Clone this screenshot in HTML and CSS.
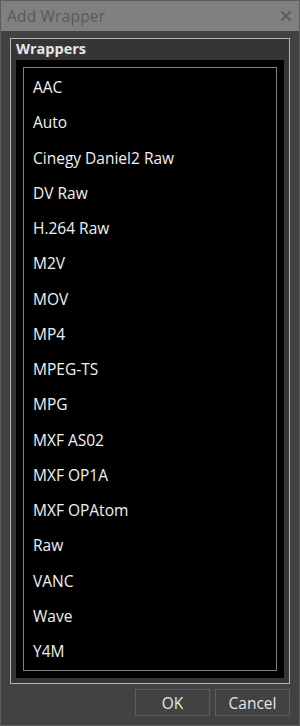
FILE: index.html
```html
<!DOCTYPE html>
<html>
<head>
<meta name="viewport" content="width=device-width, initial-scale=1">
<link rel="stylesheet" href="styles.css">
<title>Add Wrapper</title>
</head>
<body>

<div class="window">
    <div class="titlebar">
        <span class="title">Add Wrapper</span>
        <svg class="close" width="12" height="12" viewBox="0 0 12 12">
            <path d="M1.5 1.5 L10.5 10.5 M10.5 1.5 L1.5 10.5" stroke="#5e5e5e" stroke-width="2.2"/>
        </svg>
    </div>

    <div class="content">
        <div class="group">
            <div class="group_title">Wrappers</div>
            <div class="list_outer">
                <div class="list">
                    <div class="item">AAC</div>
                    <div class="item">Auto</div>
                    <div class="item">Cinegy Daniel2 Raw</div>
                    <div class="item">DV Raw</div>
                    <div class="item">H.264 Raw</div>
                    <div class="item">M2V</div>
                    <div class="item">MOV</div>
                    <div class="item">MP4</div>
                    <div class="item">MPEG-TS</div>
                    <div class="item">MPG</div>
                    <div class="item">MXF AS02</div>
                    <div class="item">MXF OP1A</div>
                    <div class="item">MXF OPAtom</div>
                    <div class="item">Raw</div>
                    <div class="item">VANC</div>
                    <div class="item">Wave</div>
                    <div class="item">Y4M</div>
                </div>
            </div>
        </div>

        <div class="buttons">
            <button class="btn">OK</button>
            <button class="btn">Cancel</button>
        </div>
    </div>
</div>

</body>
</html>
```

FILE: styles.css
```css
body {
    margin: 0;
    background-color: #424242;
    font-family: "Open Sans", "Noto Sans", sans-serif;
}

.window {
    width: 300px;
    height: 726px;
    box-sizing: border-box;
    border: 1px solid #5c5c5c;
    background-color: #424242;
    display: flex;
    flex-direction: column;
}

.titlebar {
    height: 30px;
    background-color: #808080;
    display: flex;
    align-items: center;
    justify-content: space-between;
    padding: 0 7px 0 6px;
    flex-shrink: 0;
}

.title {
    color: #5a5a5a;
    font-size: 15.5px;
    letter-spacing: 0.2px;
    margin-top: -1px;
}

.close {
    display: block;
}

.content {
    flex: 1;
    padding: 7px 9px 10px 9px;
    display: flex;
    flex-direction: column;
}

.group {
    border: 1px solid #b4b4b4;
    background-color: #353535;
    padding: 0 5px 5px 5px;
    height: 646px;
    box-sizing: border-box;
    display: flex;
    flex-direction: column;
}

.group_title {
    color: #e6e6e6;
    font-weight: bold;
    font-size: 14.5px;
    height: 22px;
    line-height: 22px;
    margin-top: -1px;
}

.list_outer {
    flex: 1;
    background-color: #000;
    padding: 7px;
    display: flex;
}

.list {
    flex: 1;
    border: 1px solid #808080;
    padding-top: 2px;
}

.item {
    color: #f2f2f2;
    font-size: 15.5px;
    height: 35.25px;
    line-height: 35.25px;
    padding-left: 9px;
}

.buttons {
    display: flex;
    justify-content: flex-end;
    gap: 5px;
    margin-top: 5px;
}

.btn {
    width: 75px;
    height: 27px;
    box-sizing: border-box;
    background-color: #424242;
    border: 1px solid #5e5e5e;
    color: #e6e6e6;
    font-family: "Open Sans", "Noto Sans", sans-serif;
    font-size: 15.5px;
    padding: 0;
}
```
